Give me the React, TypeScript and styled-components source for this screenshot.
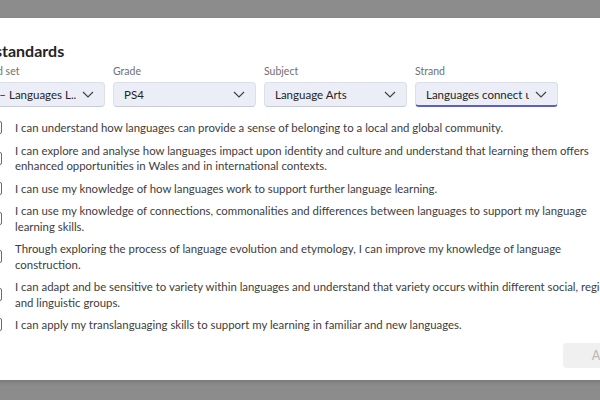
import React from "react";
import styled, { createGlobalStyle } from "styled-components";

const GlobalStyle = createGlobalStyle`
  html, body {
    margin: 0;
    padding: 0;
    width: 600px;
    height: 400px;
    overflow: hidden;
    background: #8c8c8c;
    font-family: Lato, "Noto Sans", sans-serif;
  }
`;

const Dialog = styled.div`
  box-sizing: border-box;
  margin-top: 18px;
  margin-left: -62px;
  width: 729px;
  height: 362px;
  padding: 22px 24px 12px 24px;
  background: #ffffff;
  display: flex;
  flex-direction: column;
  box-shadow: 0 2px 4px rgba(0, 0, 0, 0.15);
`;

const Title = styled.h2`
  margin: 0;
  font-size: 16px;
  line-height: 22px;
  font-weight: 700;
  color: #242424;
`;

const Filters = styled.div`
  display: grid;
  grid-template-columns: repeat(4, 143px);
  column-gap: 8px;
  margin-top: 2px;
`;

const Field = styled.div`
  display: flex;
  flex-direction: column;
  gap: 4px;
`;

const Label = styled.span`
  font-size: 10.5px;
  line-height: 14px;
  color: #707070;
`;

const Select = styled.div<{ $active?: boolean }>`
  box-sizing: border-box;
  height: 25px;
  display: flex;
  align-items: center;
  padding: 0 10px;
  gap: 6px;
  background: #eceef7;
  border: 1px solid #dcdeea;
  border-bottom: ${(p) => (p.$active ? "2px solid #5b5fc7" : "1px solid #c9cbd8")};
  border-radius: 4px;
`;

const Value = styled.span`
  flex: 1;
  overflow: hidden;
  white-space: nowrap;
  font-size: 11.5px;
  color: #242424;
`;

const List = styled.ul`
  list-style: none;
  margin: 13px 0 0 0;
  padding: 0 21px 0 27px;
  display: flex;
  flex-direction: column;
  gap: 7px;
`;

const Item = styled.li`
  display: flex;
  align-items: center;
  gap: 13px;
`;

const Box = styled.span`
  box-sizing: border-box;
  flex: none;
  width: 13px;
  height: 13px;
  border: 1px solid #6b6b6b;
  border-radius: 2px;
`;

const ItemText = styled.span`
  font-size: 11.4px;
  line-height: 15.5px;
  color: #3d3d3d;
`;

const Footer = styled.div`
  margin-top: auto;
  display: flex;
  justify-content: flex-end;
`;

const Button = styled.button`
  width: 80px;
  height: 25px;
  border: none;
  border-radius: 4px;
  background: #f0f0f0;
  color: #bdbdbd;
  font-family: inherit;
  font-size: 12.5px;
  font-weight: 600;
`;

const Chevron = () => (
  <svg width="12" height="7" viewBox="0 0 12 7" fill="none">
    <polyline points="1,1 6,6 11,1" stroke="#424242" strokeWidth="1.2" />
  </svg>
);

const filters = [
  { label: "Standard set", value: "CfW – Languages L..." },
  { label: "Grade", value: "PS4" },
  { label: "Subject", value: "Language Arts" },
  { label: "Strand", value: "Languages connect us", active: true },
];

const standards = [
  "I can understand how languages can provide a sense of belonging to a local and global community.",
  "I can explore and analyse how languages impact upon identity and culture and understand that learning them offers enhanced opportunities in Wales and in international contexts.",
  "I can use my knowledge of how languages work to support further language learning.",
  "I can use my knowledge of connections, commonalities and differences between languages to support my language learning skills.",
  "Through exploring the process of language evolution and etymology, I can improve my knowledge of language construction.",
  "I can adapt and be sensitive to variety within languages and understand that variety occurs within different social, regional and linguistic groups.",
  "I can apply my translanguaging skills to support my learning in familiar and new languages.",
];

export default function App() {
  return (
    <>
      <GlobalStyle />
      <Dialog>
        <Title>Add standards</Title>
        <Filters>
          {filters.map((f) => (
            <Field key={f.label}>
              <Label>{f.label}</Label>
              <Select $active={f.active}>
                <Value>{f.value}</Value>
                <Chevron />
              </Select>
            </Field>
          ))}
        </Filters>
        <List>
          {standards.map((s) => (
            <Item key={s}>
              <Box />
              <ItemText>{s}</ItemText>
            </Item>
          ))}
        </List>
        <Footer>
          <Button disabled>Add</Button>
        </Footer>
      </Dialog>
    </>
  );
}
